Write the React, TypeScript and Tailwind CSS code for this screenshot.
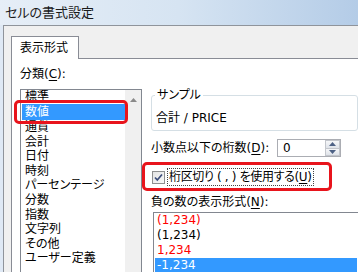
import React from "react";

const categories = [
  "標準",
  "数値",
  "通貨",
  "会計",
  "日付",
  "時刻",
  "パーセンテージ",
  "分数",
  "指数",
  "文字列",
  "その他",
  "ユーザー定義",
];

const negatives = [
  { text: "(1,234)", red: true },
  { text: "(1,234)", red: false },
  { text: "1,234", red: true },
  { text: "-1,234", red: false, selected: true },
];

function Key({ k }: { k: string }) {
  return (
    <>
      (<span className="underline underline-offset-2">{k}</span>)
    </>
  );
}

function SpinArrow({ up }: { up?: boolean }) {
  return (
    <svg width="7" height="4" viewBox="0 0 7 4" aria-hidden="true">
      <path d={up ? "M0 4 L3.5 0 L7 4 Z" : "M0 0 L3.5 4 L7 0 Z"} fill="#4d6185" />
    </svg>
  );
}

export default function App() {
  return (
    <div className="relative h-[272px] w-[358px] overflow-hidden bg-[#dde8f4] font-['DejaVu_Sans','Noto_Sans_CJK_JP',sans-serif] text-[12px] text-black [font-feature-settings:'palt']">
      {/* title bar */}
      <div className="h-[25px] bg-linear-to-r from-[#e6eef7] via-[#d6e4f2] to-[#b4cce7] pl-[5px] pt-[2px] leading-[21px] text-[13px] text-[#1a1a1a]">
        セルの書式設定
      </div>

      <div className="flex h-[247px]">
        <div className="w-[3px] shrink-0 bg-[#dfe9f5]" />
        <div className="flex min-w-0 flex-1 flex-col border-l border-t border-[#8f949b] bg-[#f0f0f0] pl-[7px] pt-[10px]">
          {/* tab */}
          <div className="relative z-10 -mb-px flex h-[23px] w-[68px] shrink-0 items-center border border-b-0 border-[#898c95] bg-white pl-[8px] leading-[16px]">
            表示形式
          </div>

          {/* tab page */}
          <div className="flex min-h-0 flex-1 overflow-hidden border-l border-t border-[#898c95] bg-white pl-[8px] pt-[5px]">
            {/* category column */}
            <div className="flex w-[122px] shrink-0 flex-col">
              <div className="shrink-0 leading-[20px]">
                分類<Key k="C" />:
              </div>
              <div className="mt-[5px] flex h-[200px] shrink-0 overflow-hidden border border-[#828790] bg-white">
                <div className="-mt-[2px] flex-1 pl-px">
                  {categories.map((c, i) => (
                    <div
                      key={c}
                      className={
                        i === 1
                          ? "h-[16px] whitespace-nowrap bg-[#3399ff] pl-[3px] leading-[16px] text-white"
                          : i === 0
                            ? "h-[16px] whitespace-nowrap pl-[3px] leading-[16px]"
                            : "h-[14.6px] whitespace-nowrap pl-[3px] leading-[14.6px]"
                      }
                    >
                      {c}
                    </div>
                  ))}
                </div>
                <div className="flex w-[16px] justify-center bg-[#f0f0f0] pt-[8px]">
                  <svg width="7" height="4" viewBox="0 0 7 4" aria-hidden="true">
                    <path d="M0 4 L3.5 0 L7 4 Z" fill="#8a8a8a" />
                  </svg>
                </div>
              </div>
            </div>

            {/* settings column */}
            <div className="ml-[9px] flex min-w-0 flex-1 flex-col">
              <fieldset className="mt-[23px] h-[44px] shrink-0 rounded-[3px] border border-[#d5dfe5] pl-[3px]">
                <legend className="px-[2px] leading-[16px]">サンプル</legend>
                <div className="mt-[7px] pl-[1px] leading-[16px]">合計 / PRICE</div>
              </fieldset>

              <div className="mt-[8px] flex h-[18px] shrink-0 items-center">
                <div className="w-[126px] whitespace-nowrap leading-[16px]">
                  小数点以下の桁数<Key k="D" />:
                </div>
                <div className="flex h-[18px] w-[64px] border border-[#abadb3] bg-white">
                  <div className="flex-1 pl-[5px] leading-[16px]">0</div>
                  <div className="flex w-[15px] flex-col">
                    <div className="flex flex-1 items-center justify-center border border-[#c3c6cc] bg-linear-to-b from-[#f6f7f9] to-[#dfe3e9]">
                      <SpinArrow up />
                    </div>
                    <div className="flex flex-1 items-center justify-center border border-t-0 border-[#c3c6cc] bg-linear-to-b from-[#f6f7f9] to-[#dfe3e9]">
                      <SpinArrow />
                    </div>
                  </div>
                </div>
              </div>

              <div className="mt-[11px] flex h-[18px] shrink-0 items-center">
                <div className="ml-px flex h-[13px] w-[13px] items-center justify-center border border-[#8e8f8f] bg-linear-to-br from-[#e4e4e4] to-[#f8f8f8]">
                  <svg width="11" height="11" viewBox="0 0 11 11" aria-hidden="true">
                    <path d="M2 5.5 L4.3 8 L9 2.5" fill="none" stroke="#3c4d7a" strokeWidth="1.7" />
                  </svg>
                </div>
                <div className="ml-[2px] whitespace-nowrap border border-dotted border-[#444] px-px leading-[16px] tracking-[-0.35px]">
                  桁区切り ( , ) を使用する<Key k="U" />
                </div>
              </div>

              <div className="mt-[8px] shrink-0 whitespace-nowrap leading-[16px]">
                負の数の表示形式<Key k="N" />:
              </div>

              <div className="ml-[2px] mt-[2px] h-[80px] shrink-0 overflow-hidden border border-r-0 border-[#828790] bg-white px-px">
                {negatives.map((n, i) => (
                  <div
                    key={i}
                    className={
                      n.selected
                        ? "h-[15px] bg-[#3399ff] pl-[2px] leading-[15px] text-white"
                        : n.red
                          ? "h-[15px] pl-[2px] leading-[15px] text-[#ff0000]"
                          : "h-[15px] pl-[2px] leading-[15px]"
                    }
                  >
                    {n.text}
                  </div>
                ))}
              </div>
            </div>
          </div>
        </div>
      </div>

      {/* red highlight callouts */}
      <div className="absolute left-[14px] top-[100px] h-[24px] w-[114px] rounded-[5px] border-[3px] border-[#e8141c]" />
      <div className="absolute left-[142px] top-[162px] h-[29px] w-[190px] rounded-[5px] border-[3px] border-[#e8141c]" />
    </div>
  );
}
